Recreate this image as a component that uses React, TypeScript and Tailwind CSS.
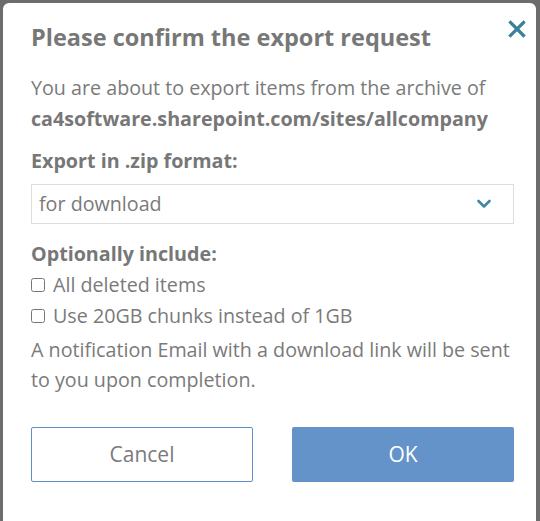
import { useState } from "react";

function CloseIcon() {
	return (
		<svg width="18" height="18" viewBox="0 0 18 18" fill="none">
			<path
				d="M2.5 2.5 L15.5 15.5 M15.5 2.5 L2.5 15.5"
				stroke="#3b8199"
				strokeWidth="3.2"
				strokeLinecap="square"
			/>
		</svg>
	);
}

function Chevron() {
	return (
		<svg width="14" height="10" viewBox="0 0 14 10" fill="none">
			<path
				d="M1.5 2 L7 7.5 L12.5 2"
				stroke="#3d8aa4"
				strokeWidth="2.6"
				strokeLinecap="round"
				strokeLinejoin="round"
			/>
		</svg>
	);
}

export default function App() {
	const [deleted, setDeleted] = useState(false);
	const [chunks, setChunks] = useState(false);

	return (
		<div
			className="h-[521px] w-[540px] overflow-hidden bg-[#6c6c6c] pt-[3px] pl-[3px]"
			style={{ fontFamily: '"Open Sans", "Noto Sans", sans-serif' }}
		>
			<div className="h-[530px] w-[533px] rounded-t-md bg-white pt-[19px] pl-[28px] pr-[22px] text-[19.7px] text-[#7a7a7a]">
				<div className="flex items-start justify-between">
					<h2 className="text-[23.5px] leading-[30px] font-bold text-[#777777]">
						Please confirm the export request
					</h2>
					<button className="mt-[-6px] mr-[-16px] p-1">
						<CloseIcon />
					</button>
				</div>

				<p className="mt-5 leading-[31px]">
					You are about to export items from the archive of
					<br />
					<span className="font-bold text-[#777777]">
						ca4software.sharepoint.com/sites/allcompany
					</span>
				</p>

				<div className="mt-[11px] font-bold leading-[31px] text-[#777777]">
					Export in .zip format:
				</div>
				<div className="mt-2 flex h-[40px] w-[483px] items-center justify-between border border-[#dddddd] pl-[7px] pr-[22px]">
					<span>for download</span>
					<Chevron />
				</div>

				<div className="mt-[14px] font-bold leading-[31px] text-[#777777]">
					Optionally include:
				</div>
				<label className="flex items-center gap-[8px] leading-[31px]">
					<input
						type="checkbox"
						className="m-0 h-[14px] w-[14px]"
						checked={deleted}
						onChange={() => setDeleted((v) => !v)}
					/>
					All deleted items
				</label>
				<label className="flex items-center gap-[8px] leading-[31px]">
					<input
						type="checkbox"
						className="m-0 h-[14px] w-[14px]"
						checked={chunks}
						onChange={() => setChunks((v) => !v)}
					/>
					Use 20GB chunks instead of 1GB
				</label>
				<p className="mt-[4px] leading-[30px]">
					A notification Email with a download link will be sent
					<br />
					to you upon completion.
				</p>

				<div className="mt-8 flex w-[483px] justify-between">
					<button className="h-[55px] w-[222px] rounded-[2px] border border-[#5f8fcb] bg-white text-[21px] text-[#7a7a7a]">
						Cancel
					</button>
					<button className="h-[55px] w-[222px] rounded-[2px] bg-[#6393c9] text-[21px] text-white">
						OK
					</button>
				</div>
			</div>
		</div>
	);
}
